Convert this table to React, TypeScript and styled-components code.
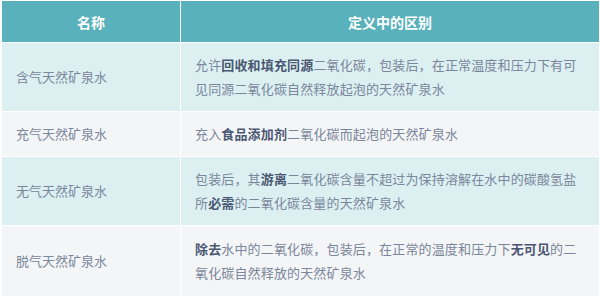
import React from "react";
import styled, { createGlobalStyle } from "styled-components";

const GlobalStyle = createGlobalStyle`
  body {
    margin: 0;
    background: #ffffff;
    font-family: "Noto Sans CJK SC", "Noto Sans", sans-serif;
  }
`;

const Table = styled.div`
  display: grid;
  grid-template-columns: 178px 1fr;
  gap: 1px;
  width: 597px;
  margin: 1px 0 0 2px;
  background: #ffffff;
`;

const HeadCell = styled.div`
  height: 41px;
  display: flex;
  align-items: center;
  justify-content: center;
  background: #59b1bc;
  color: #ffffff;
  font-size: 14px;
  font-weight: 700;
`;

const NameCell = styled.div<{ $alt?: boolean; $last?: boolean }>`
  display: flex;
  align-items: center;
  padding: ${(p) => (p.$last ? "11px 14px" : "10px 14px")};
  background: ${(p) => (p.$alt ? "#f4f5f6" : "#dcf0f2")};
  color: #7a869b;
  font-size: 13px;
  line-height: 24px;
`;

const DescCell = styled.div<{ $alt?: boolean; $last?: boolean }>`
  display: flex;
  align-items: center;
  padding: ${(p) => (p.$last ? "11px 16px 11px 14px" : "10px 16px 10px 14px")};
  background: ${(p) => (p.$alt ? "#f4f5f6" : "#dcf0f2")};
  color: #7a869b;
  font-size: 13px;
  line-height: 24px;
  letter-spacing: 0.15px;

  b {
    font-weight: 700;
    color: #4b5873;
  }
`;

const rows = [
  {
    name: "含气天然矿泉水",
    desc: (
      <span>
        允许<b>回收和填充同源</b>二氧化碳，包装后，在正常温度和压力下有可见同源二氧化碳自然释放起泡的天然矿泉水
      </span>
    ),
  },
  {
    name: "充气天然矿泉水",
    desc: (
      <span>
        充入<b>食品添加剂</b>二氧化碳而起泡的天然矿泉水
      </span>
    ),
  },
  {
    name: "无气天然矿泉水",
    desc: (
      <span>
        包装后，其<b>游离</b>二氧化碳含量不超过为保持溶解在水中的碳酸氢盐所<b>必需</b>的二氧化碳含量的天然矿泉水
      </span>
    ),
  },
  {
    name: "脱气天然矿泉水",
    desc: (
      <span>
        <b>除去</b>水中的二氧化碳，包装后，在正常的温度和压力下<b>无可见</b>的二氧化碳自然释放的天然矿泉水
      </span>
    ),
  },
];

const App = () => {
  return (
    <>
      <GlobalStyle />
      <Table>
        <HeadCell>名称</HeadCell>
        <HeadCell>定义中的区别</HeadCell>
        {rows.map((row, i) => (
          <React.Fragment key={row.name}>
            <NameCell $alt={i % 2 === 1} $last={i === rows.length - 1}>
              {row.name}
            </NameCell>
            <DescCell $alt={i % 2 === 1} $last={i === rows.length - 1}>
              {row.desc}
            </DescCell>
          </React.Fragment>
        ))}
      </Table>
    </>
  );
};

export default App;
